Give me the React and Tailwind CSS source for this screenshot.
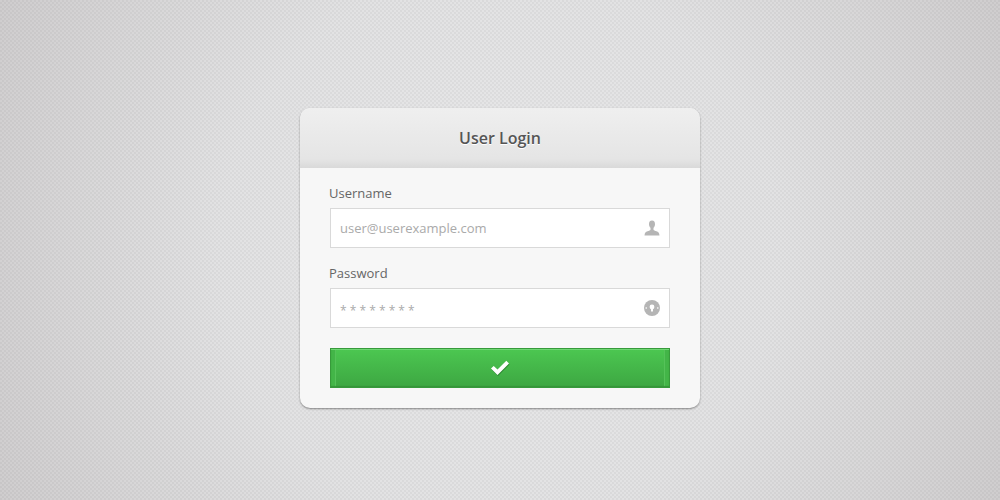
import React from 'react';

function UserIcon() {
  return (
    <svg viewBox="0 0 16 16" className="w-4 h-4" fill="#b5b5b5" aria-hidden="true">
      <path d="M8 .5C5.900.5 4.900 2 5 4.200c.1 1.700.6 2.700 1.500 3.600v2c-.3.700-1.500 1-3 1.500C1.700 11.900.7 12.700.5 15.500h15c-.2-2.800-1.200-3.600-3-4.200-1.500-.5-2.700-.8-3-1.500V7.800c.9-.9 1.400-1.900 1.500-3.600C11.100 2 10.100.5 8 .5z" />
    </svg>
  );
}

function LockIcon() {
  return (
    <svg viewBox="0 0 16 16" className="w-4 h-4" aria-hidden="true">
      <circle cx="8" cy="8" r="8" fill="#b5b5b5" />
      <circle cx="8" cy="7" r="2.400" fill="#fff" />
      <path d="M7 8h2v3.500H7z" fill="#fff" />
      <path d="M1.500 7.200h1.500v1.600H1.500zM13 7.200h1.500v1.600H13z" fill="#f0f0f0" />
    </svg>
  );
}

function CheckIcon() {
  return (
    <svg viewBox="0 0 20 16" className="w-5 h-4" aria-hidden="true">
      <path d="M1.500 9.500l2.700-2.500 3.800 3.800L16.800 2l2.700 2.500L8 16z" fill="#26762b" opacity=".7" />
      <path d="M1 8.500l2.700-2.500 3.800 3.600L16.300.8 19 3.500 7.500 15z" fill="#fff" />
    </svg>
  );
}

function Field({ id, label, type, placeholder, icon, inputClass }) {
  return (
    <div className="mb-[15px]">
      <label htmlFor={id} className="block -ml-px text-[13px] leading-5 text-[#666]">
        {label}
      </label>
      <div className="mt-[5px] flex items-center h-10 pr-[9px] bg-white border border-[#d9d9d9]">
        <input
          id={id}
          type={type}
          placeholder={placeholder}
          className={`flex-1 min-w-0 h-full pl-[9px] text-[#777] placeholder:text-[#aaa] placeholder:opacity-100 outline-none ${inputClass}`}
        />
        {icon}
      </div>
    </div>
  );
}

export default function App() {
  return (
    <div className="min-h-screen flex items-center justify-center pt-4 bg-[repeating-conic-gradient(#0000000a_0_25%,transparent_0_50%),radial-gradient(circle_at_center,#e8e8e9_0%,#e2e2e3_50%,#cfcdce_100%)] bg-size-[4px_4px,100%_100%] font-['Open_Sans','Noto_Sans',sans-serif]">
      <form
        className="w-full max-w-[400px] rounded-[10px] overflow-hidden bg-[#f7f7f7] shadow-[0_1px_2px_rgba(0,0,0,0.4)]"
        onSubmit={e => e.preventDefault()}>
        <div className="h-15 flex items-center justify-center rounded-t-[10px] bg-linear-to-b from-[#efefef] via-[#e5e5e5] via-85% to-[#d9d9d9]">
          <h1 className="text-base leading-6 font-semibold text-[#555] [text-shadow:0_1px_0_#fff]">
            User Login
          </h1>
        </div>
        <div className="px-[30px] pt-[15px] pb-5">
          <Field
            id="username"
            label="Username"
            type="text"
            placeholder="user@userexample.com"
            icon={<UserIcon />}
            inputClass="text-[13px]"
          />
          <Field
            id="password"
            label="Password"
            type="password"
            placeholder="* * * * * * * *"
            icon={<LockIcon />}
            inputClass="pt-1 text-xs"
          />
          <button
            type="submit"
            aria-label="Log in"
            className="mt-5 w-full h-10 flex items-center justify-center border border-[#379a3b] bg-linear-to-b from-[#4cc751] to-[#3da742] shadow-[inset_0_1px_0_#6fd673,inset_0_-1px_1px_#359439,inset_4px_0_0_#43b548,inset_5px_0_0_#55c259,inset_-4px_0_0_#43b548,inset_-5px_0_0_#55c259]">
            <CheckIcon />
          </button>
        </div>
      </form>
    </div>
  );
}
